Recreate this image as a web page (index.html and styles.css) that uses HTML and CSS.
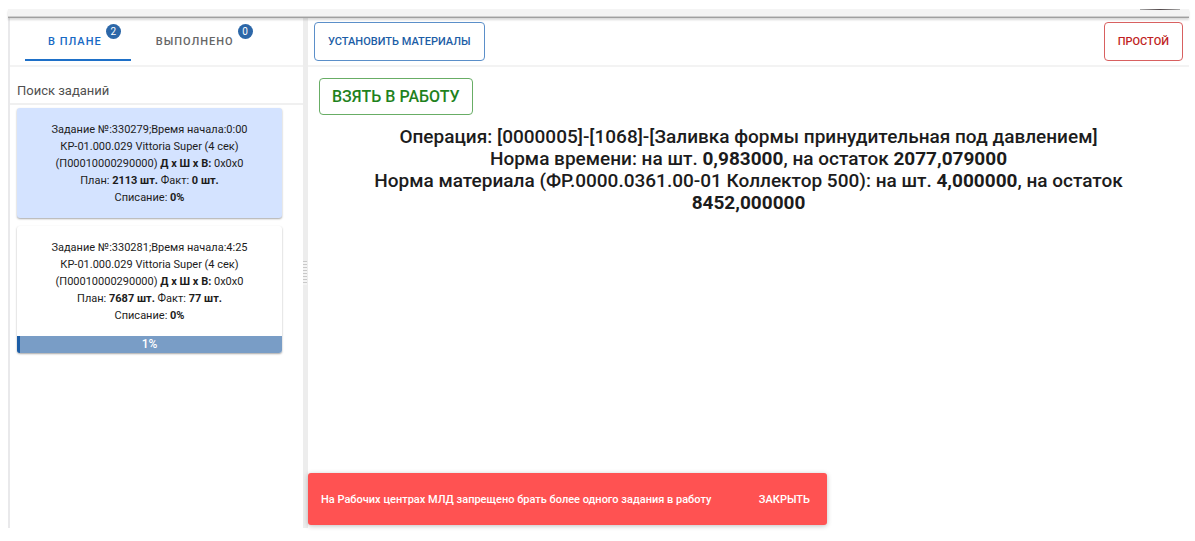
FILE: index.html
```html
<!DOCTYPE html>
<html lang="ru">
<head>
<meta charset="utf-8">
<title>Рабочий центр</title>
<link rel="stylesheet" href="styles.css">
</head>
<body>
<div class="app">
  <header class="topbar"><span class="avatar"></span></header>
  <div class="workspace">
    <aside class="sidebar">
      <nav class="tabs" role="tablist">
        <button class="tab tab-active" role="tab" aria-selected="true" type="button">В ПЛАНЕ<span class="badge">2</span></button>
        <button class="tab" role="tab" aria-selected="false" type="button">ВЫПОЛНЕНО<span class="badge">0</span></button>
      </nav>
      <input class="search" type="text" placeholder="Поиск заданий" aria-label="Поиск заданий">
      <div class="tasks">
        <article class="task task-selected">
          <div class="task-body">
            <div>Задание №:330279;Время начала:0:00</div>
            <div>КР-01.000.029 Vittoria Super (4 сек)</div>
            <div>(П00010000290000) <b>Д x Ш x В:</b> 0x0x0</div>
            <div>План: <b>2113 шт.</b> Факт: <b>0 шт.</b></div>
            <div>Списание: <b>0%</b></div>
          </div>
        </article>
        <article class="task">
          <div class="task-body">
            <div>Задание №:330281;Время начала:4:25</div>
            <div>КР-01.000.029 Vittoria Super (4 сек)</div>
            <div>(П00010000290000) <b>Д x Ш x В:</b> 0x0x0</div>
            <div>План: <b>7687 шт.</b> Факт: <b>77 шт.</b></div>
            <div>Списание: <b>0%</b></div>
          </div>
          <div class="progress">
            <div class="progress-fill" style="width: 1%"></div>
            <span class="progress-label">1%</span>
          </div>
        </article>
      </div>
    </aside>
    <div class="splitter"><span class="grip"></span></div>
    <main class="main">
      <div class="toolbar">
        <button class="btn btn-blue" type="button">УСТАНОВИТЬ МАТЕРИАЛЫ</button>
        <button class="btn btn-red" type="button">ПРОСТОЙ</button>
      </div>
      <section class="operation">
        <button class="btn btn-green" type="button">ВЗЯТЬ В РАБОТУ</button>
        <div class="details">
          <div>Операция: [0000005]-[1068]-[Заливка формы принудительная под давлением]</div>
          <div>Норма времени: на шт. <b>0,983000</b>, на остаток <b>2077,079000</b></div>
          <div>Норма материала (ФР.0000.0361.00-01 Коллектор 500): на шт. <b>4,000000</b>, на остаток <b>8452,000000</b></div>
        </div>
      </section>
      <div class="snackbar" role="alert">
        <span>На Рабочих центрах МЛД запрещено брать более одного задания в работу</span>
        <button class="snackbar-close" type="button">ЗАКРЫТЬ</button>
      </div>
    </main>
  </div>
</div>
</body>
</html>
```
FILE: styles.css
```css
* { box-sizing: border-box; }

body {
  margin: 0;
  background: #fff;
  color: #1c1c1c;
  font-family: Roboto, "Liberation Sans", sans-serif;
}

button, input { font-family: inherit; }

.app {
  display: flex;
  flex-direction: column;
  height: 100vh;
  padding: 9px 6px 13px 8px;
}

.topbar {
  display: flex;
  flex: none;
  justify-content: flex-end;
  height: 9px;
  padding-right: 9px;
  background: linear-gradient(#f4f4f4 7px, #cfcfcf 7px);
  border-bottom: 1px solid #a0a0a0;
  box-shadow: 0 2px 2px rgba(0, 0, 0, 0.15);
  z-index: 1;
}

.avatar {
  width: 40px;
  height: 1px;
  background: linear-gradient(90deg, #aaa, #544a4c 50%, #aaa);
}

.workspace {
  display: flex;
  flex: 1;
  min-height: 0;
}

.sidebar {
  flex: 0 0 295px;
  border-left: 2px solid #e9e9eb;
}

.tabs {
  display: flex;
  gap: 2px;
  height: 49px;
  padding-left: 15px;
  border-bottom: 2px solid #f3f3f3;
}

.tab {
  position: relative;
  height: 43px;
  padding: 6px 29px 0 23px;
  border: 0;
  border-bottom: 2px solid transparent;
  background: none;
  color: #666;
  font-size: 11px;
  font-weight: 500;
  letter-spacing: 1px;
}

.tab-active {
  border-bottom-color: #1e70c8;
  color: #1769c4;
}

.badge {
  position: absolute;
  top: 6px;
  right: 10px;
  width: 15px;
  height: 15px;
  border-radius: 50%;
  background: #2c67a8;
  color: #fff;
  font-size: 10px;
  font-weight: 400;
  letter-spacing: normal;
  line-height: 15px;
}

.search {
  display: block;
  width: 100%;
  height: 38px;
  padding: 10px 7px 0;
  border: 0;
  border-bottom: 2px solid #f0f0f0;
  outline: 0;
  background: none;
  font-size: 13px;
}

.search::placeholder { color: #505050; opacity: 1; }

.tasks {
  display: flex;
  flex-direction: column;
  gap: 8px;
  padding: 3px 21px 8px 7px;
}

.task {
  overflow: hidden;
  border-radius: 3px;
  background: #fff;
  box-shadow: 0 1px 2px rgba(0, 0, 0, 0.35);
  font-size: 11px;
  line-height: 17px;
  text-align: center;
}

.task-selected { background: #d4e3ff; }

.task-body { padding: 13px 4px 12px; }

.progress {
  position: relative;
  height: 17px;
  background: #799dc6;
  color: #fff;
}

.progress-fill {
  height: 100%;
  background: #1c5da6;
}

.progress-label {
  position: absolute;
  inset: 0;
  font-size: 12px;
  font-weight: 500;
}

.splitter {
  display: flex;
  flex: 0 0 5px;
  align-items: center;
  background: #ededed;
}

.grip {
  width: 4px;
  height: 24px;
  background: repeating-linear-gradient(#c8c8c8 0 1px, #f4f4f4 1px 3px);
}

.main {
  position: relative;
  flex: 1;
  min-width: 0;
}

.toolbar {
  display: flex;
  align-items: flex-start;
  justify-content: space-between;
  height: 49px;
  padding: 4px 6px 0;
  border-bottom: 2px solid #f3f3f3;
}

.btn {
  border: 1px solid;
  border-radius: 4px;
  background: #fff;
  font-weight: 500;
}

.btn-blue, .btn-red {
  height: 39px;
  padding: 0 13px;
  font-size: 11px;
}

.btn-blue { border-color: #5b8fc9; color: #1c5da6; }
.btn-red { border-color: #d86060; color: #c01f24; }

.btn-green {
  height: 37px;
  padding: 0 12px;
  border-color: #68ad65;
  color: #1f821d;
  font-size: 16px;
}

.operation { padding: 11px 11px 0; }

.details {
  padding-top: 11px;
  font-size: 19px;
  font-weight: 500;
  line-height: 22px;
  text-align: center;
}

.details b { font-weight: 700; }

.snackbar {
  position: absolute;
  bottom: 3px;
  left: 0;
  display: flex;
  align-items: center;
  justify-content: space-between;
  width: 519px;
  max-width: 100%;
  height: 52px;
  padding: 0 17px 0 13px;
  border-radius: 3px;
  background: #ff5252;
  box-shadow: 0 1px 5px rgba(0, 0, 0, 0.25);
  color: #fff;
  font-size: 11px;
  font-weight: 500;
}

.snackbar-close {
  padding: 0;
  border: 0;
  background: none;
  color: #fff;
  font-size: 11px;
  font-weight: 500;
}
```
